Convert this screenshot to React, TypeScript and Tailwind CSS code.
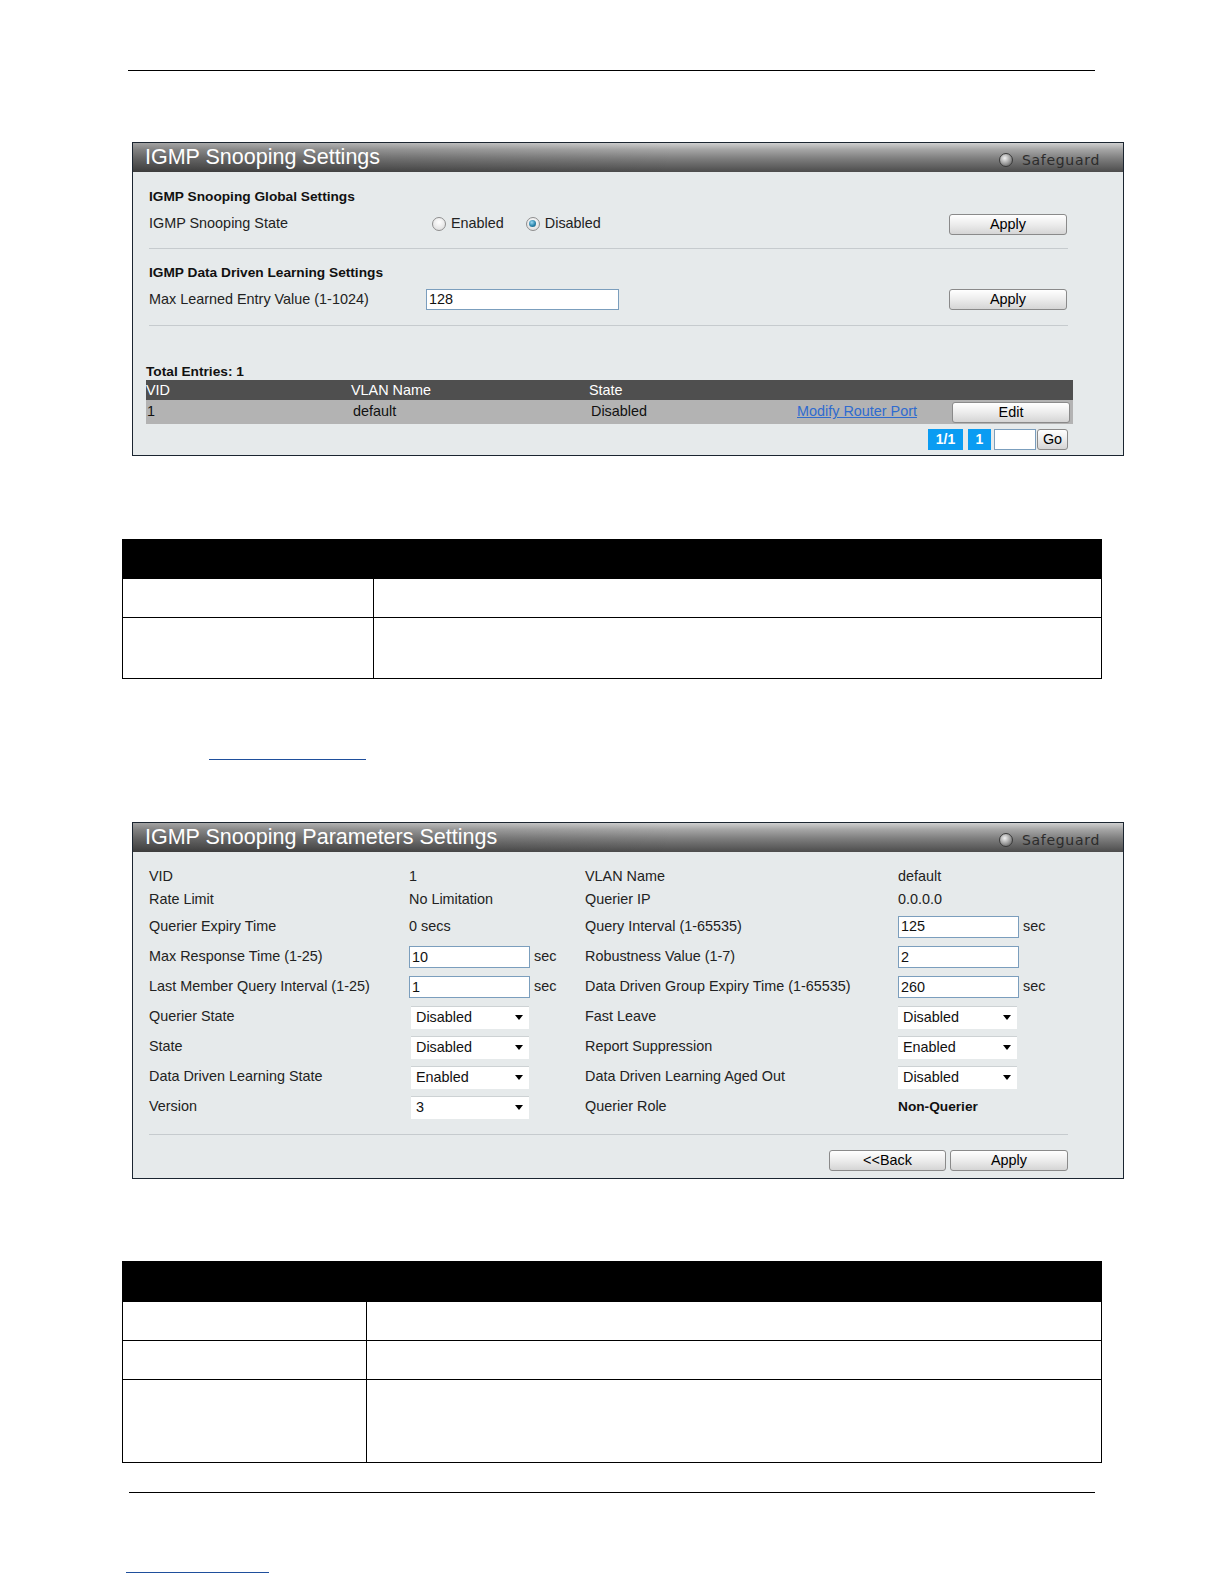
import React from "react";

function TitleBar({ title }: { title: string }) {
  return (
    <div className="h-[29px] flex items-center justify-between pl-[12px] pr-[23px] bg-[linear-gradient(to_right,rgba(0,0,0,0.22),rgba(0,0,0,0)_55%),linear-gradient(to_bottom,#cfcfcf_0%,#a6a6a6_22%,#7c7c7c_55%,#5c5c5c_85%,#4c4c4c_100%)]">
      <span className="text-white text-[21.5px] leading-none">{title}</span>
      <div className="flex items-center gap-[9px] mt-[5px]">
        <span className="w-[14px] h-[14px] rounded-full border border-[#3a3a3a] bg-[radial-gradient(circle_at_40%_35%,#f2f2f2,#a0a0a0_50%,#4a4a4a)]" />
        <span className="font-['DejaVu_Sans',sans-serif] text-[14px] tracking-[0.7px] leading-none text-[#2c2c2c]">
          Safeguard
        </span>
      </div>
    </div>
  );
}

function Btn({ label, w }: { label: string; w: string }) {
  return (
    <div
      className={`${w} h-[21px] flex items-center justify-center border border-[#8a8a8a] rounded-[3px] bg-[linear-gradient(to_bottom,#ffffff,#ececec_50%,#d5d5d5)] text-black text-[14.4px] leading-none`}
    >
      {label}
    </div>
  );
}

function Radio({ on }: { on?: boolean }) {
  return (
    <span className="w-[14px] h-[14px] rounded-full border border-[#8e8e8e] bg-[radial-gradient(circle_at_50%_35%,#ffffff,#d8d8d8)] flex items-center justify-center">
      {on ? (
        <span className="w-[7px] h-[7px] rounded-full bg-[radial-gradient(circle_at_40%_35%,#9ad8f2,#2b86ad_55%,#134f6b)]" />
      ) : null}
    </span>
  );
}

function Inp({ v }: { v: string }) {
  return (
    <div className="w-[121px] h-[22px] bg-white border border-[#7b9ebd] flex items-center pl-[2px] text-[14.4px] leading-none text-[#111]">
      {v}
    </div>
  );
}

function Sel({ v, left }: { v: string; left?: boolean }) {
  return (
    <div
      className={`${left ? "ml-[2px] w-[118px]" : "w-[119px]"} h-[23px] bg-white border-t border-[#cdd2d4] flex items-center justify-between pl-[5px] pr-[6px] text-[14.4px] leading-none text-[#111]`}
    >
      <span>{v}</span>
      <span className="w-0 h-0 border-l-[4px] border-r-[4px] border-t-[5px] border-l-transparent border-r-transparent border-t-black" />
    </div>
  );
}

function Sep() {
  return <div className="h-px bg-[#c6cbce]" />;
}

type Cell = React.ReactNode;

function PRow({ h, a, b, c, d }: { h: string; a: Cell; b: Cell; c: Cell; d: Cell }) {
  return (
    <div className={`${h} grid grid-cols-[260px_176px_313px_1fr] items-center`}>
      <div>{a}</div>
      <div className="flex items-center">{b}</div>
      <div>{c}</div>
      <div className="flex items-center">{d}</div>
    </div>
  );
}

function Sec() {
  return <span className="ml-[4px] text-[14.4px] text-[#222]">sec</span>;
}

export default function App() {
  return (
    <div className="w-[1224px] min-h-[1584px] bg-white pt-[70px] font-['Liberation_Sans',Arial,sans-serif] text-[14.4px] text-[#222]">
      <div className="ml-[128px] w-[967px] h-px bg-black" />

      {/* Panel 1 */}
      <div className="mt-[71px] ml-[132px] w-[992px] border border-[#1b2530] bg-[#e6eaeb]">
        <TitleBar title="IGMP Snooping Settings" />
        <div className="pt-[13px] pb-[5px] pl-[16px] pr-[55px]">
          <div className="h-[24px] flex items-center font-bold text-[13.7px] text-[#111]">
            IGMP Snooping Global Settings
          </div>
          <div className="h-[28px] pt-[2px] flex items-center">
            <div className="w-[283px]">IGMP Snooping State</div>
            <div className="flex items-center gap-[5px]">
              <Radio />
              <span>Enabled</span>
            </div>
            <div className="flex items-center gap-[5px] ml-[22px]">
              <Radio on />
              <span>Disabled</span>
            </div>
            <div className="ml-auto mr-px">
              <Btn label="Apply" w="w-[118px]" />
            </div>
          </div>
          <div className="mt-[11px]">
            <Sep />
          </div>
          <div className="mt-[12px] h-[24px] flex items-center font-bold text-[13.7px] text-[#111]">
            IGMP Data Driven Learning Settings
          </div>
          <div className="h-[28px] pt-px flex items-center">
            <div className="w-[277px]">Max Learned Entry Value (1-1024)</div>
            <div className="w-[193px] h-[21px] bg-white border border-[#7b9ebd] flex items-center pl-[2px] text-[#111]">
              128
            </div>
            <div className="ml-auto mr-px">
              <Btn label="Apply" w="w-[118px]" />
            </div>
          </div>
          <div className="mt-[12px]">
            <Sep />
          </div>

          <div className="-ml-[3px] -mr-[5px]">
            <div className="mt-[38px] h-[16px] flex items-center font-bold text-[13.7px] text-[#111]">
              Total Entries: 1
            </div>
            <div className="h-[20px] bg-[#4f4f4f] text-white grid grid-cols-[205px_238px_1fr] items-center">
              <span>VID</span>
              <span>VLAN Name</span>
              <span>State</span>
            </div>
            <div className="h-[24px] bg-[#b3b3b3] text-[#111] grid grid-cols-[205px_238px_208px_155px_1fr] items-center">
              <span className="pl-[1px]">1</span>
              <span className="pl-[2px]">default</span>
              <span className="pl-[2px]">Disabled</span>
              <span className="text-[#2f6bcf] underline">Modify Router Port</span>
              <div>
                <Btn label="Edit" w="w-[118px]" />
              </div>
            </div>
          </div>
          <div className="mt-[5px] h-[21px] flex items-center justify-end">
            <div className="w-[35px] h-[21px] bg-[#0a9cf2] text-white font-bold text-[14px] flex items-center justify-center">
              1/1
            </div>
            <div className="ml-[5px] w-[23px] h-[21px] bg-[#0a9cf2] text-white font-bold text-[14px] flex items-center justify-center">
              1
            </div>
            <div className="ml-[3px] w-[42px] h-[21px] bg-white border border-[#7b9ebd]" />
            <div className="ml-[1px]">
              <Btn label="Go" w="w-[31px]" />
            </div>
          </div>
        </div>
      </div>

      {/* Doc table 1 */}
      <div className="mt-[83px] ml-[122px] w-[980px] border border-black">
        <div className="h-[38px] bg-black" />
        <div className="h-[39px] border-t border-black grid grid-cols-[250px_1fr]">
          <div />
          <div className="border-l border-black" />
        </div>
        <div className="h-[61px] border-t border-black grid grid-cols-[250px_1fr]">
          <div />
          <div className="border-l border-black" />
        </div>
      </div>

      <div className="mt-[80px] ml-[209px] w-[157px] h-px bg-[#1f4f9c]" />

      {/* Panel 2 */}
      <div className="mt-[62px] ml-[132px] w-[992px] border border-[#1b2530] bg-[#e6eaeb]">
        <TitleBar title="IGMP Snooping Parameters Settings" />
        <div className="pt-[13px] pb-[7px] pl-[16px] pr-[55px]">
          <PRow h="h-[23px]" a="VID" b="1" c="VLAN Name" d="default" />
          <PRow h="h-[23px]" a="Rate Limit" b="No Limitation" c="Querier IP" d="0.0.0.0" />
          <PRow
            h="h-[31px]"
            a="Querier Expiry Time"
            b="0 secs"
            c="Query Interval (1-65535)"
            d={
              <>
                <Inp v="125" />
                <Sec />
              </>
            }
          />
          <PRow
            h="h-[30px]"
            a="Max Response Time (1-25)"
            b={
              <>
                <Inp v="10" />
                <Sec />
              </>
            }
            c="Robustness Value (1-7)"
            d={<Inp v="2" />}
          />
          <PRow
            h="h-[30px]"
            a="Last Member Query Interval (1-25)"
            b={
              <>
                <Inp v="1" />
                <Sec />
              </>
            }
            c="Data Driven Group Expiry Time (1-65535)"
            d={
              <>
                <Inp v="260" />
                <Sec />
              </>
            }
          />
          <PRow h="h-[30px]" a="Querier State" b={<Sel v="Disabled" left />} c="Fast Leave" d={<Sel v="Disabled" />} />
          <PRow h="h-[30px]" a="State" b={<Sel v="Disabled" left />} c="Report Suppression" d={<Sel v="Enabled" />} />
          <PRow
            h="h-[30px]"
            a="Data Driven Learning State"
            b={<Sel v="Enabled" left />}
            c="Data Driven Learning Aged Out"
            d={<Sel v="Disabled" />}
          />
          <PRow
            h="h-[30px]"
            a="Version"
            b={<Sel v="3" left />}
            c="Querier Role"
            d={<span className="font-bold text-[13.7px] text-[#111]">Non-Querier</span>}
          />
          <div className="mt-[12px]">
            <Sep />
          </div>
          <div className="mt-[15px] flex justify-end gap-[4px]">
            <Btn label="<<Back" w="w-[117px]" />
            <Btn label="Apply" w="w-[118px]" />
          </div>
        </div>
      </div>

      {/* Doc table 2 */}
      <div className="mt-[82px] ml-[122px] w-[980px] border border-black">
        <div className="h-[39px] bg-black" />
        <div className="h-[39px] border-t border-black grid grid-cols-[243px_1fr]">
          <div />
          <div className="border-l border-black" />
        </div>
        <div className="h-[39px] border-t border-black grid grid-cols-[243px_1fr]">
          <div />
          <div className="border-l border-black" />
        </div>
        <div className="h-[83px] border-t border-black grid grid-cols-[243px_1fr]">
          <div />
          <div className="border-l border-black" />
        </div>
      </div>

      <div className="mt-[29px] ml-[129px] w-[966px] h-px bg-black" />
      <div className="mt-[79px] ml-[126px] w-[143px] h-px bg-[#1f4f9c]" />
    </div>
  );
}
